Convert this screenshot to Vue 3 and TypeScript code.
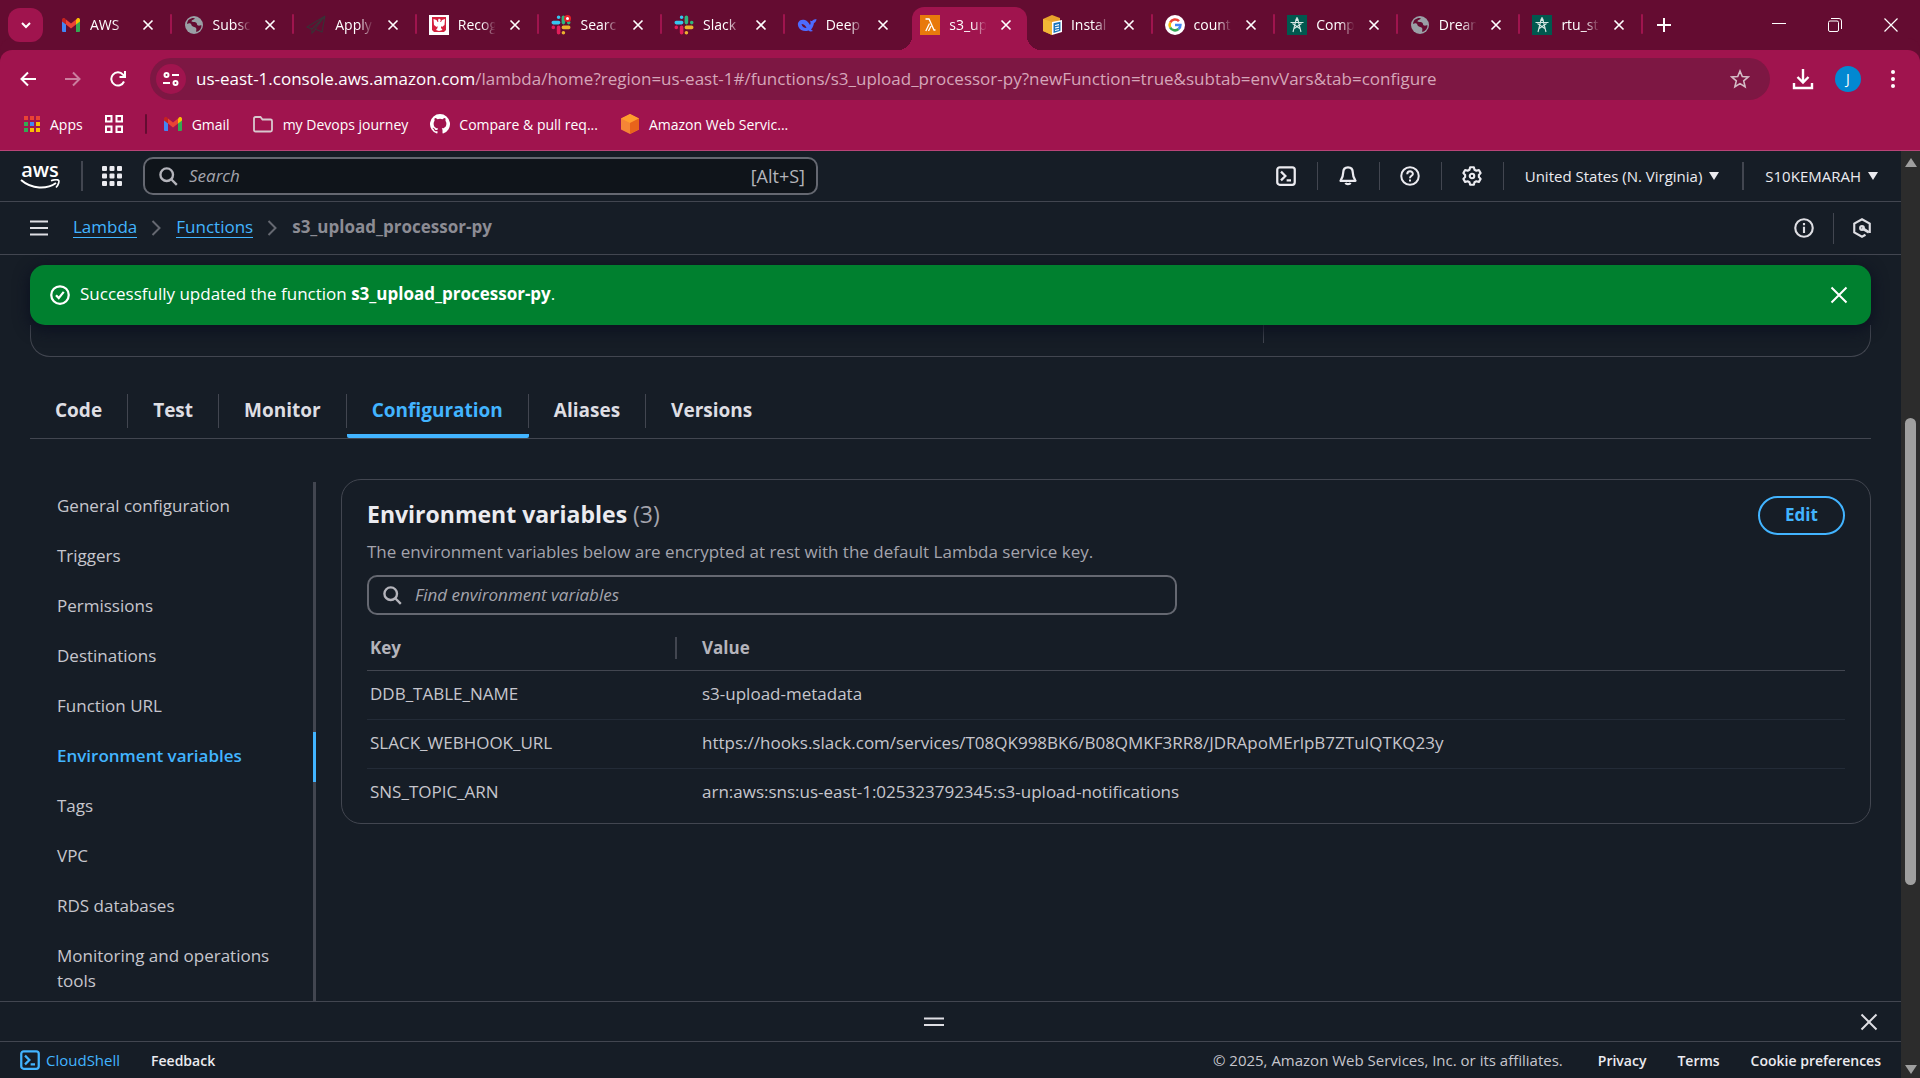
<script setup lang="ts">
import { ref } from 'vue'

interface BrowserTab {
  icon: string
  title: string
  active?: boolean
}

interface EnvVar {
  key: string
  value: string
}

const browserTabs: BrowserTab[] = [
  { icon: 'gmail', title: 'AWS' },
  { icon: 'globe', title: 'Subsc' },
  { icon: 'plane', title: 'Apply' },
  { icon: 'eagle', title: 'Recog' },
  { icon: 'slackdot', title: 'Searc' },
  { icon: 'slack', title: 'Slack' },
  { icon: 'whale', title: 'Deep' },
  { icon: 'lambda', title: 's3_up', active: true },
  { icon: 'box', title: 'Instal' },
  { icon: 'google', title: 'count' },
  { icon: 'rtu', title: 'Comp' },
  { icon: 'globe', title: 'Dream' },
  { icon: 'rtu', title: 'rtu_st' },
]

const functionTabs: string[] = ['Code', 'Test', 'Monitor', 'Configuration', 'Aliases', 'Versions']
const activeTab = ref('Configuration')

const sideItems: string[] = [
  'General configuration',
  'Triggers',
  'Permissions',
  'Destinations',
  'Function URL',
  'Environment variables',
  'Tags',
  'VPC',
  'RDS databases',
  'Monitoring and operations tools',
]
const activeItem = ref('Environment variables')

const envVars: EnvVar[] = [
  { key: 'DDB_TABLE_NAME', value: 's3-upload-metadata' },
  {
    key: 'SLACK_WEBHOOK_URL',
    value: 'https://hooks.slack.com/services/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',
  },
  { key: 'SNS_TOPIC_ARN', value: 'arn:aws:sns:us-east-1:025323792345:s3-upload-notifications' },
]

const search = ref('')
const filter = ref('')
const appColors: string[] = ['#ea4335', '#ea4335', '#ea4335', '#34a853', '#4285f4', '#fbbc04', '#34a853', '#fbbc04', '#fbbc04']
</script>

<template>
  <div class="window">
    <svg class="defs" aria-hidden="true">
      <symbol id="i-gmail" viewBox="0 0 20 20">
        <path d="M1 4.5V16a1 1 0 0 0 1 1h3V9z" fill="#4285f4" />
        <path d="M19 4.500V16a1 1 0 0 1-1 1h-3V9z" fill="#34a853" />
        <path d="M15 4.500V9.500l4-3V5c0-2-2-2.500-3-1.500z" fill="#fbbc04" />
        <path d="M1 5c0-2 2-2.500 3-1.500L5 4.500v5l-4-3z" fill="#c5221f" />
        <path d="M5 4.500l5 4 5-4v5l-5 4-5-4z" fill="#ea4335" />
      </symbol>
      <symbol id="i-globe" viewBox="0 0 20 20">
        <circle cx="10" cy="10" r="9" fill="#9aa0a6" />
        <path d="M5 4.500c2-1.500 5-2 6-1-1 1.500-3 1-3.500 2.500 0 1.500 3 .5 4.500 1.500s.5 2.500 2 3 2.500-.5 3.500 0c0 3-2 5.500-5 6.500-1-1 .5-2.500-.5-4s-4-1-4.500-3S5 8 3 9c.2-2 .8-3.500 2-4.500z" fill="#640c31" />
      </symbol>
      <symbol id="i-plane" viewBox="0 0 20 20">
        <path d="M19 1 1 12l5 2zM19 1 6 14v4l3-3M19 1l-3 16-7-3z" fill="none" stroke="#3a3036" stroke-width="1.200" />
      </symbol>
      <symbol id="i-eagle" viewBox="0 0 20 20">
        <path d="M0 0h20v20H0z" fill="#fff" />
        <path d="M3 2h14v13l-2 2H5l-2-2z" fill="#d4213d" />
        <path d="M9 5l1-1.500L12 5l-1 1.500 1 .5 1-2 3-1-.5 6-2.500 2-1-1v2l1.500 2L10 16l-3-1 1.500-2v-2l-1 1L5 10l-.5-6 3 1 1 2 1-.5z" fill="#fff" />
      </symbol>
      <symbol id="i-slack" viewBox="0 0 20 20">
        <g stroke-width="3.600" stroke-linecap="round">
          <path d="M7.600 2.300v.01M2.300 7.600h5.300" stroke="#36c5f0" />
          <path d="M12.400 2.300v5.300M17.700 7.600h.01" stroke="#2eb67d" />
          <path d="M12.400 12.400h5.300M12.400 17.700v.01" stroke="#ecb22e" />
          <path d="M7.600 12.400v5.300M2.300 12.400v.01" stroke="#e01e5a" />
        </g>
      </symbol>
      <symbol id="i-slackdot" viewBox="0 0 20 20">
        <use href="#i-slack" />
        <circle cx="16.500" cy="3.500" r="3.500" fill="#e8202a" />
        <circle cx="16.500" cy="3.500" r="1.500" fill="#fff" />
      </symbol>
      <symbol id="i-whale" viewBox="0 0 20 20">
        <path d="M1 8c1-3 4-4 7-3 2 .7 4 3 5 5 1-1 .5-3 0-4.500 1.500.5 2 1 2.500 0S18 4.500 19.500 4c-.2 2-1 3.500-2.500 4-.5 3-1.500 5-3 6.500l2 1.500c-2 .8-3.500.5-4.500-.5-4 1.500-8.500 0-10-3.500C1 10.800.7 9.500 1 8z" fill="#4d6bfe" />
        <path d="M4.500 9c2 0 4 1.500 5 4-2.500 0-4.500-1.500-5-4z" fill="#640c31" />
      </symbol>
      <symbol id="i-lambda" viewBox="0 0 20 20">
        <path d="M0 0h20v20H0z" fill="#e8790c" />
        <path d="M5.500 4h3.500l5 11h1.500M9.500 8.500 5.800 16M11 11l-2.500 5" fill="none" stroke="#fff" stroke-width="1.300" />
      </symbol>
      <symbol id="i-box" viewBox="0 0 20 20">
        <path d="M1 4l9-4 8 3v3l-8 2v12l-9-4z" fill="#e8a32c" />
        <path d="M1 4l9 3v13l-9-4z" fill="#f2b636" />
        <path d="M10 7l10-2v12l-10 3z" fill="#fff" />
        <path d="M11.500 8.300l7-1.500v9l-7 2.200z" fill="#1b75bb" />
        <path d="M13 10.500l4-.8M13 13l4-.8M13 15.500l4-1" stroke="#fff" stroke-width="1.200" />
      </symbol>
      <symbol id="i-google" viewBox="0 0 20 20">
        <circle cx="10" cy="10" r="10" fill="#fff" />
        <g fill="none" stroke-width="2.600">
          <path d="M14 6.200A5.400 5.400 0 0 0 5.200 7.500" stroke="#ea4335" />
          <path d="M5.200 7.500a5.400 5.400 0 0 0 0 5" stroke="#fbbc04" />
          <path d="M5.200 12.500a5.400 5.400 0 0 0 8.300 1.600" stroke="#34a853" />
          <path d="M13.500 14.100A5.400 5.400 0 0 0 15.400 10H10" stroke="#4285f4" />
        </g>
      </symbol>
      <symbol id="i-rtu" viewBox="0 0 20 20">
        <path d="M0 0h20v20H0z" fill="#00594f" />
        <path d="M10 2v4M9 5 6 17M11 5l3 12M3.500 7.500h13M5.500 8.500l8 5.500M14.500 8.500l-8 5.500" fill="none" stroke="#d6e8e4" stroke-width="1.100" />
        <circle cx="10" cy="4.500" r="1.500" fill="#d6e8e4" />
      </symbol>
      <symbol id="i-x" viewBox="0 0 16 16">
        <path d="M2 2l12 12M14 2 2 14" fill="none" stroke="currentColor" stroke-width="2.200" />
      </symbol>
      <symbol id="i-close" viewBox="0 0 16 16">
        <path d="M2 2l12 12M14 2 2 14" fill="none" stroke="currentColor" stroke-width="1.600" />
      </symbol>
      <symbol id="i-shell" viewBox="0 0 16 16">
        <rect x="1" y="1" width="14" height="14" rx="2" fill="none" stroke="currentColor" stroke-width="1.800" />
        <path d="M4 4.500 7.500 8 4 11.500M8.500 11.500H12" fill="none" stroke="currentColor" stroke-width="1.800" />
      </symbol>
      <symbol id="i-search" viewBox="0 0 16 16">
        <circle cx="6.500" cy="6.500" r="5.300" fill="none" stroke="currentColor" stroke-width="2" />
        <path d="M10.500 10.500 15 15" fill="none" stroke="currentColor" stroke-width="2" />
      </symbol>
    </svg>

    <header class="chrome">
      <div class="strip">
        <button class="tab-search" aria-label="Search tabs">
          <svg width="12" height="12" viewBox="0 0 12 12"><path d="M2 4l4 4 4-4" fill="none" stroke="#fff" stroke-width="2" /></svg>
        </button>
        <div class="tabs">
          <div v-for="(tab, i) in browserTabs" :key="i" class="tab" :class="{ on: tab.active, before: i === 6 }">
            <svg class="fav"><use :href="'#i-' + tab.icon" /></svg>
            <span class="tab-title">{{ tab.title }}</span>
            <button class="tab-close" aria-label="Close tab">
              <svg width="12" height="12"><use href="#i-x" /></svg>
            </button>
          </div>
        </div>
        <button class="bare new-tab" aria-label="New tab">
          <svg width="14" height="14" viewBox="0 0 14 14"><path d="M7 0v14M0 7h14" stroke="#fff" stroke-width="2" /></svg>
        </button>
        <div class="win-controls">
          <button class="bare" aria-label="Minimize"><svg width="14" height="14" viewBox="0 0 14 14"><path d="M0 5.500h14" stroke="#fff" /></svg></button>
          <button class="bare" aria-label="Restore">
            <svg width="14" height="14" viewBox="0 0 14 14" fill="none" stroke="#fff"><rect x=".5" y="3" width="10" height="10.500" rx="1.500" /><path d="M3 .5h8a2.500 2.500 0 0 1 2.500 2.500v8" /></svg>
          </button>
          <button class="bare" aria-label="Close"><svg width="14" height="14" viewBox="0 0 14 14"><path d="M.5.5l13 13M13.500.5l-13 13" stroke="#fff" stroke-width="1.200" /></svg></button>
        </div>
      </div>

      <div class="toolbar">
        <div class="nav-buttons">
          <button class="bare" aria-label="Back"><svg width="16" height="16" viewBox="0 0 16 16" fill="none" stroke="#fff" stroke-width="2"><path d="M16 8H1.500M8 1.500 1.500 8 8 14.500" /></svg></button>
          <button class="bare dim" aria-label="Forward"><svg width="16" height="16" viewBox="0 0 16 16" fill="none" stroke="#fff" stroke-width="2"><path d="M0 8h14.500M8 1.500 14.500 8 8 14.500" /></svg></button>
          <button class="bare" aria-label="Reload"><svg width="16" height="16" viewBox="0 0 16 16" fill="none" stroke="#fff" stroke-width="2"><path d="M14 10.500A6.600 6.600 0 1 1 13 3.700L15 6M15 0v6H9.500" /></svg></button>
        </div>
        <div class="omnibox">
          <button class="site-info" aria-label="Site information">
            <svg width="16" height="16" viewBox="0 0 16 16" fill="none" stroke="#fff" stroke-width="2"><circle cx="3.500" cy="4" r="2" /><path d="M9 4h7M0 12h7" /><circle cx="12.500" cy="12" r="2" /></svg>
          </button>
          <div class="url"><span class="host">us-east-1.console.aws.amazon.com</span>/lambda/home?region=us-east-1#/functions/s3_upload_processor-py?newFunction=true&amp;subtab=envVars&amp;tab=configure</div>
          <button class="bare star" aria-label="Bookmark this tab">
            <svg width="20" height="20" viewBox="0 0 20 20"><path d="M10 2l2.300 5.500 5.900.5-4.500 3.900 1.400 5.800L10 14.600l-5.100 3.100 1.400-5.800L1.800 8l5.900-.5z" fill="none" stroke="#d5bcc6" stroke-width="1.600" /></svg>
          </button>
        </div>
        <div class="tools">
          <button class="bare" aria-label="Downloads"><svg width="22" height="22" viewBox="0 0 22 22" fill="none" stroke="#fff" stroke-width="2.400"><path d="M11 1v13M5.500 9l5.500 5.500L16.500 9M2 15v5h18v-5" /></svg></button>
          <button class="avatar" aria-label="Profile">J</button>
          <button class="bare" aria-label="Menu"><svg width="6" height="20" viewBox="0 0 6 20" fill="#fff"><circle cx="3" cy="3" r="2" /><circle cx="3" cy="10" r="2" /><circle cx="3" cy="17" r="2" /></svg></button>
        </div>
      </div>

      <nav class="bookmarks">
        <a href="#">
          <svg width="18" height="18" viewBox="0 0 18 18"><rect v-for="(c, i) in appColors" :key="i" :x="(i % 3) * 6 + 1" :y="Math.floor(i / 3) * 6 + 1" width="4" height="4" :fill="c" /></svg>Apps
        </a>
        <a href="#" aria-label="Tab groups">
          <svg width="18" height="18" viewBox="0 0 18 18" fill="none" stroke="#fff" stroke-width="2"><path d="M1 1h5.500v5.500H1zM11.500 1H17v5.500h-5.500zM1 11.500h5.500V17H1zM11.500 11.500H17V17h-5.500z" /></svg>
        </a>
        <span class="bm-sep"></span>
        <a href="#"><svg width="20" height="20"><use href="#i-gmail" /></svg>Gmail</a>
        <a href="#">
          <svg width="22" height="18" viewBox="0 0 22 18"><path d="M2 3.500C2 2.500 2.500 2 3.500 2h5l2 2.500h8c1 0 1.500.5 1.500 1.500v9c0 1-.5 1.500-1.500 1.500h-15C2.500 16.500 2 16 2 15z" fill="none" stroke="#d8c8ce" stroke-width="1.800" /></svg>my Devops journey
        </a>
        <a href="#">
          <svg width="20" height="20" viewBox="0 0 16 16"><path d="M8 0a8 8 0 0 0-2.500 15.600c.4 0 .5-.2.500-.4v-1.500c-2.200.5-2.700-1-2.700-1-.4-.9-.9-1.200-.9-1.200-.7-.5 0-.5 0-.5.8.1 1.300.9 1.300.9.700 1.200 1.900.9 2.300.7 0-.5.300-.9.500-1.100-1.800-.2-3.600-.9-3.600-4 0-.8.300-1.600.800-2.100 0-.2-.4-1 .1-2.100 0 0 .7-.2 2.200.8a7.500 7.500 0 0 1 4 0c1.500-1 2.200-.8 2.200-.8.4 1.100.2 1.900.1 2.100.5.5.8 1.300.8 2.100 0 3.100-1.900 3.800-3.700 4 .3.300.6.800.6 1.500v2.200c0 .2.100.5.500.4A8 8 0 0 0 8 0z" fill="#fff" /></svg>Compare &amp; pull req...
        </a>
        <a href="#">
          <svg width="20" height="20" viewBox="0 0 20 20"><path d="M10 0l9 4.500v11L10 20l-9-4.500v-11z" fill="#f58536" /><path d="M10 0l9 4.500L10 9 1 4.500z" fill="#ff9d2e" /><path d="M10 9l9-4.500v11L10 20z" fill="#e8641b" /></svg>Amazon Web Servic...
        </a>
      </nav>
    </header>

    <div class="viewport">
      <div class="console">
        <div class="topnav">
          <a href="#" class="logo" aria-label="AWS home">
            <span>aws</span>
            <svg width="40" height="11" viewBox="0 0 40 11"><path d="M1 1c11 9.500 26 9.500 35 3" fill="none" stroke="#fff" stroke-width="2" /><path d="M31 1.800c3-1 6.500-1.200 7.500-.6s0 4.800-2.500 7.300" fill="none" stroke="#fff" stroke-width="1.700" /></svg>
          </a>
          <button class="bare waffle" aria-label="Services">
            <svg width="20" height="20" viewBox="0 0 20 20" fill="#ebebf0"><rect v-for="n in 9" :key="n" :x="((n - 1) % 3) * 7.500" :y="Math.floor((n - 1) / 3) * 7.500" width="5" height="5" rx="1" /></svg>
          </button>
          <label class="search">
            <svg width="19" height="19"><use href="#i-search" /></svg>
            <input v-model="search" type="text" placeholder="Search" aria-label="Search" />
            <span>[Alt+S]</span>
          </label>
          <div class="utils">
            <button class="bare" aria-label="CloudShell"><svg width="20" height="20"><use href="#i-shell" /></svg></button>
            <button class="bare" aria-label="Notifications">
              <svg width="20" height="20" viewBox="0 0 16 16" fill="none" stroke="currentColor" stroke-width="1.800"><path d="M8 1C5.500 1 4.200 2.800 4.200 5c0 3.500-1 5-2.200 6.800h12C12.800 10 11.800 8.500 11.800 5c0-2.200-1.300-4-3.800-4z" stroke-linejoin="round" /><path d="M6 13.500c.5 1.300 3.500 1.300 4 0" /></svg>
            </button>
            <button class="bare" aria-label="Help">
              <svg width="20" height="20" viewBox="0 0 16 16" fill="none" stroke="currentColor" stroke-width="1.600"><circle cx="8" cy="8" r="7" /><path d="M5.800 6.500C5.800 3.500 10.300 3.600 10.300 6.300 10.300 7.800 8 8 8 9.800M8 10.800v1.500" /></svg>
            </button>
            <button class="bare" aria-label="Settings">
              <svg width="20" height="20" viewBox="0 0 16 16" fill="none" stroke="currentColor" stroke-width="1.700" stroke-linejoin="round"><path d="M6.500 1h3l.5 2 1.500.8 2-.6 1.400 2.500L13.500 7.200v1.600l1.400 1.500-1.400 2.500-2-.6L10 13l-.5 2h-3L6 13l-1.500-.8-2 .6-1.400-2.500 1.400-1.500V7.200L1.100 5.700l1.400-2.500 2 .6L6 3z" /><circle cx="8" cy="8" r="1.800" /></svg>
            </button>
            <button class="bare menu region">United States (N. Virginia)<i class="caret"></i></button>
            <button class="bare menu account">S10KEMARAH<i class="caret"></i></button>
          </div>
        </div>

        <div class="crumbs">
          <button class="bare burger" aria-label="Open navigation">
            <svg width="18" height="16" viewBox="0 0 18 16"><path d="M0 1.500h18M0 8h18M0 14.500h18" stroke="#dedee3" stroke-width="2" /></svg>
          </button>
          <a href="#">Lambda</a>
          <svg class="chev" width="10" height="16" viewBox="0 0 10 16"><path d="M1.500 1 8.500 8l-7 7" fill="none" stroke="#656871" stroke-width="2" /></svg>
          <a href="#">Functions</a>
          <svg class="chev" width="10" height="16" viewBox="0 0 10 16"><path d="M1.500 1 8.500 8l-7 7" fill="none" stroke="#656871" stroke-width="2" /></svg>
          <span class="current">s3_upload_processor-py</span>
          <div class="crumb-tools">
            <button class="bare" aria-label="Info">
              <svg width="20" height="20" viewBox="0 0 16 16" fill="none" stroke="currentColor" stroke-width="1.700"><circle cx="8" cy="8" r="7" /><path d="M8 7v5M8 4v1.700" /></svg>
            </button>
            <button class="bare" aria-label="Amazon Q">
              <svg width="20" height="20" viewBox="0 0 16 16" fill="none" stroke="currentColor" stroke-width="1.700"><path d="M14.200 12V4.500L8 1 1.800 4.500v7L8 15l2.800-1.600" /><path d="M8 8l5.500 3.500" stroke-width="2.200" /><circle cx="8" cy="8" r="1.500" /></svg>
            </button>
          </div>
        </div>

        <main class="scroll">
          <div class="flash" role="status">
            <svg width="20" height="20" viewBox="0 0 16 16" fill="none" stroke="currentColor" stroke-width="1.800"><circle cx="8" cy="8" r="7" /><path d="M4.800 8.200 7 10.500l4-5" /></svg>
            <p>Successfully updated the function <b>s3_upload_processor-py</b>.</p>
            <button class="bare" aria-label="Dismiss"><svg width="20" height="20"><use href="#i-close" /></svg></button>
          </div>
          <section class="overview"><div></div></section>

          <nav class="fn-tabs" role="tablist">
            <button v-for="t in functionTabs" :key="t" role="tab" :class="{ on: t === activeTab }" @click="activeTab = t"><span>{{ t }}</span></button>
          </nav>

          <div class="config">
            <nav class="side">
              <a v-for="s in sideItems" :key="s" href="#" :class="{ on: s === activeItem }" @click.prevent="activeItem = s">{{ s }}</a>
            </nav>

            <section class="card">
              <div class="card-head">
                <h2>Environment variables <span>({{ envVars.length }})</span></h2>
                <button class="edit">Edit</button>
              </div>
              <p class="desc">The environment variables below are encrypted at rest with the default Lambda service key.</p>
              <label class="find">
                <svg width="19" height="19"><use href="#i-search" /></svg>
                <input v-model="filter" type="text" placeholder="Find environment variables" aria-label="Find environment variables" />
              </label>
              <table>
                <thead>
                  <tr><th scope="col"><div>Key</div></th><th scope="col">Value</th></tr>
                </thead>
                <tbody>
                  <tr v-for="v in envVars" :key="v.key"><td>{{ v.key }}</td><td>{{ v.value }}</td></tr>
                </tbody>
              </table>
            </section>
          </div>
        </main>

        <div class="split">
          <button class="bare handle" aria-label="Resize panel">
            <svg width="20" height="10" viewBox="0 0 20 10"><path d="M0 1.500h20M0 8h20" stroke="#dedee3" stroke-width="2" /></svg>
          </button>
          <button class="bare" aria-label="Close panel"><svg width="20" height="20"><use href="#i-close" /></svg></button>
        </div>

        <footer class="footer">
          <a href="#" class="shell"><svg width="20" height="20"><use href="#i-shell" /></svg>CloudShell</a>
          <a href="#">Feedback</a>
          <span class="copy">© 2025, Amazon Web Services, Inc. or its affiliates.</span>
          <a href="#">Privacy</a>
          <a href="#">Terms</a>
          <a href="#">Cookie preferences</a>
        </footer>
      </div>

      <div class="scrollbar" aria-hidden="true">
        <i class="up"></i>
        <div class="track"><div class="thumb"></div></div>
        <i class="down"></i>
      </div>
    </div>
  </div>
</template>

<style>
body {
  margin: 0;
  background: #161d26;
}
</style>

<style scoped>
* {
  box-sizing: border-box;
}
.window {
  display: flex;
  flex-direction: column;
  height: 100vh;
  overflow: hidden;
  font-family: "Open Sans", "Noto Sans", sans-serif;
  font-size: 17px;
  color: #c6c6cd;
}
.defs {
  position: absolute;
  width: 0;
  height: 0;
}
svg {
  flex: none;
  display: block;
}
button,
input {
  font: inherit;
  color: inherit;
}
button {
  cursor: pointer;
}
a {
  color: inherit;
  text-decoration: none;
}
.bare {
  display: flex;
  align-items: center;
  justify-content: center;
  padding: 0;
  border: 0;
  background: none;
}

/* Browser frame */
.chrome {
  flex: none;
  background: #a0144e;
  border-bottom: 1px solid #b84477;
  color: #fff;
  font-size: 14px;
}
.strip {
  display: flex;
  align-items: center;
  height: 50px;
  padding-left: 8px;
  background: #640c31;
}
.tab-search {
  display: flex;
  align-items: center;
  justify-content: center;
  width: 35px;
  height: 34px;
  margin-right: 6px;
  padding: 0;
  border: 0;
  border-radius: 12px;
  background: #a0144e;
}
.tabs {
  display: grid;
  grid-template-columns: repeat(13, minmax(0, 1fr));
  flex: 1;
  align-self: stretch;
  padding-top: 7px;
}
.tab {
  position: relative;
  display: flex;
  align-items: center;
  padding: 0 18px 7px 12px;
}
.tab::after {
  content: "";
  position: absolute;
  right: 0;
  top: 7px;
  width: 2px;
  height: 20px;
  border-radius: 1px;
  background: #a0144e;
}
.tab.before::after {
  display: none;
}
.tab.on {
  margin: 0 3px 0 5px;
  padding: 0 15px 7px 8px;
  border-radius: 12px 12px 0 0;
  background: #a0144e;
}
.tab.on::before,
.tab.on::after {
  content: "";
  position: absolute;
  top: auto;
  bottom: 0;
  width: 14px;
  height: 14px;
  border-radius: 0;
}
.tab.on::before {
  left: -14px;
  background: radial-gradient(circle at 0 0, transparent 14px, #a0144e 14px);
}
.tab.on::after {
  right: -14px;
  background: radial-gradient(circle at 100% 0, transparent 14px, #a0144e 14px);
}
.fav {
  width: 20px;
  height: 20px;
}
.tab-title {
  flex: 1;
  min-width: 0;
  margin: 0 4px 0 9px;
  overflow: hidden;
  white-space: nowrap;
  line-height: 20px;
  mask-image: linear-gradient(to right, #000 50%, transparent 80%);
}
.tab-close {
  padding: 0;
  border: 0;
  background: none;
}
.new-tab {
  width: 42px;
  height: 34px;
}
.win-controls {
  display: flex;
  justify-content: flex-end;
  width: 235px;
  gap: 42px;
  padding-right: 22px;
}
.toolbar {
  display: flex;
  align-items: center;
  height: 58px;
  background: #a0144e;
  border-radius: 12px 12px 0 0;
  box-shadow: 0 -12px 0 #640c31;
}
.nav-buttons {
  display: flex;
  gap: 29px;
  width: 150px;
  padding-left: 20px;
}
.dim {
  opacity: 0.45;
}
.omnibox {
  display: flex;
  flex: 1;
  align-items: center;
  min-width: 0;
  height: 42px;
  padding: 0 20px 0 6px;
  border-radius: 21px;
  background: #7d1743;
}
.site-info {
  display: flex;
  align-items: center;
  justify-content: center;
  width: 30px;
  height: 30px;
  padding: 0;
  border: 0;
  border-radius: 15px;
  background: #a0144e;
}
.url {
  flex: 1;
  min-width: 0;
  margin-left: 10px;
  overflow: hidden;
  white-space: nowrap;
  font-size: 17px;
  line-height: 24px;
  color: #d5a6b9;
}
.host {
  color: #fff;
}
.tools {
  display: flex;
  align-items: center;
  width: 150px;
  padding-left: 22px;
  gap: 21px;
}
.avatar {
  width: 26px;
  height: 26px;
  padding: 0;
  border: 0;
  border-radius: 13px;
  background: #0288d1;
  line-height: 24px;
  text-align: center;
}
.tools .bare:last-child {
  margin-left: 8px;
}
.bookmarks {
  display: flex;
  align-items: center;
  height: 42px;
  padding: 0 0 10px 23px;
  white-space: nowrap;
}
.bookmarks a {
  display: flex;
  align-items: center;
  gap: 9px;
  margin-right: 22px;
}
.bm-sep {
  width: 2px;
  height: 20px;
  margin-right: 16px;
  border-radius: 1px;
  background: #640c31;
}

/* Console */
.viewport {
  display: flex;
  flex: 1;
  min-height: 0;
  background: #161d26;
}
.console {
  display: flex;
  flex: 1;
  flex-direction: column;
  min-width: 0;
}
.topnav {
  display: flex;
  flex: none;
  align-items: center;
  height: 51px;
  border-bottom: 1px solid #424650;
}
.logo {
  display: flex;
  flex-direction: column;
  align-items: center;
  width: 40px;
  margin-left: 20px;
  padding-bottom: 2px;
  color: #fff;
  font-weight: 600;
}
.logo span {
  font-size: 20px;
  line-height: 18px;
}
.waffle {
  height: 30px;
  margin-left: 21px;
  padding-left: 19px;
  border-left: 2px solid #424650;
}
.search,
.find {
  display: flex;
  align-items: center;
  border: 2px solid #656871;
  border-radius: 10px;
  color: #b4b4bb;
}
.search {
  width: 675px;
  height: 38px;
  margin-left: 21px;
  padding: 0 11px 0 14px;
  background: #0f141a;
}
.search span {
  font-size: 18px;
  line-height: 24px;
}
.search input,
.find input {
  flex: 1;
  min-width: 0;
  padding: 0;
  border: 0;
  outline: 0;
  background: none;
  line-height: 24px;
}
.search input {
  margin-left: 11px;
}
::placeholder {
  color: #a4a4ad;
  font-style: italic;
  opacity: 1;
}
.utils {
  display: flex;
  align-items: center;
  margin-left: auto;
  margin-right: 23px;
  color: #ebebf0;
}
.utils > * {
  height: 28px;
  padding: 0 21px 0 20px;
  border-left: 1px solid #424650;
}
.utils > :first-child {
  border: 0;
}
.menu {
  gap: 7px;
  font-size: 15px;
  font-weight: 500;
}
.utils .region {
  padding: 0 23px 0 21px;
}
.utils .account {
  padding: 0 0 0 21px;
  border-left-width: 2px;
}
.caret {
  border: 5px solid transparent;
  border-top: 8px solid #ebebf0;
  border-bottom: 0;
}
.crumbs {
  display: flex;
  flex: none;
  align-items: center;
  height: 53px;
  padding: 0 29px 0 30px;
  border-bottom: 1px solid #424650;
}
.burger {
  margin-right: 25px;
}
.crumbs a {
  margin-bottom: 2px;
  border-bottom: 1px solid #42b4ff;
  color: #42b4ff;
  line-height: 20px;
}
.chev {
  margin: 0 15px 0 14px;
}
.current {
  margin-bottom: 2px;
  color: #8c8c94;
  font-weight: 700;
  line-height: 22px;
}
.crumb-tools {
  display: flex;
  margin-left: auto;
  color: #dedee3;
}
.crumb-tools .bare {
  height: 31px;
}
.crumb-tools .bare + .bare {
  margin-left: 19px;
  padding-left: 18px;
  border-left: 1px solid #424650;
}
.scroll {
  display: flex;
  flex: 1;
  flex-direction: column;
  min-height: 0;
  padding: 10px 30px 0;
  overflow: hidden;
}
.flash {
  position: relative;
  display: flex;
  flex: none;
  align-items: center;
  height: 60px;
  padding: 0 22px 0 20px;
  border-radius: 15px;
  background: #00802f;
  box-shadow: 0 4px 15px 1px #0b1020;
  color: #fff;
}
.flash p {
  flex: 1;
  margin: 0 0 2px 10px;
  line-height: 24px;
}
.overview {
  display: flex;
  flex: none;
  justify-content: flex-end;
  height: 32px;
  border: 1px solid #424650;
  border-top: 0;
  border-radius: 0 0 20px 20px;
}
.overview div {
  width: 33%;
  height: 18px;
  border-left: 1px solid #424650;
}
.fn-tabs {
  display: flex;
  flex: none;
  margin-top: 30px;
  border-bottom: 1px solid #424650;
}
.fn-tabs button {
  height: 51px;
  padding: 0;
  border: 0;
  border-bottom: 4px solid transparent;
  border-radius: 2px;
  background: none;
  color: #dedee3;
  font-size: 19px;
  font-weight: 700;
}
.fn-tabs span {
  display: block;
  padding: 0 25px 2px;
  border-right: 1px solid #424650;
  line-height: 32px;
}
.fn-tabs button:last-child span {
  border: 0;
}
.fn-tabs .on {
  border-bottom-color: #42b4ff;
  color: #42b4ff;
}
.config {
  display: flex;
  flex: 1;
  align-items: flex-start;
  gap: 25px;
  min-height: 0;
  margin-top: 40px;
}
.side {
  display: flex;
  flex: none;
  flex-direction: column;
  width: 286px;
  margin-top: 3px;
}
.side a {
  padding: 11px 40px 14px 27px;
  border-right: 3px solid #424650;
  line-height: 25px;
}
.side .on {
  border-color: #42b4ff;
  color: #42b4ff;
  font-weight: 600;
}
.card {
  flex: 1;
  min-width: 0;
  padding: 16px 25px 6px;
  border: 1px solid #424650;
  border-radius: 20px;
}
.card-head {
  display: flex;
  align-items: center;
  justify-content: space-between;
  height: 39px;
}
h2 {
  margin: 0 0 4px;
  color: #ebebf0;
  font-size: 23px;
  line-height: 30px;
}
h2 span {
  color: #a4a4ad;
  font-weight: 400;
}
.edit {
  width: 87px;
  height: 39px;
  padding: 0 0 2px;
  border: 2px solid #42b4ff;
  border-radius: 20px;
  background: none;
  color: #42b4ff;
  font-weight: 700;
}
.desc {
  margin: 4px 0 11px;
  color: #a4a4ad;
  line-height: 25px;
}
.find {
  max-width: 810px;
  height: 40px;
  padding: 0 14px;
}
.find input {
  margin-left: 13px;
}
table {
  width: 100%;
  margin-top: 11px;
  border-collapse: collapse;
  table-layout: fixed;
  text-align: left;
}
th {
  height: 44px;
  padding: 0 0 0 25px;
  border-bottom: 1px solid #424650;
  color: #b4b4bb;
}
th:first-child {
  width: 310px;
  padding-left: 3px;
}
th div {
  border-right: 2px solid #424650;
  line-height: 22px;
}
td {
  height: 49px;
  padding: 0 0 2px 25px;
  border-bottom: 1px solid #232b37;
}
td:first-child {
  padding-left: 3px;
}
tr:last-child td {
  border-bottom: 0;
}
.split {
  display: flex;
  flex: none;
  align-items: center;
  height: 40px;
  padding: 0 22px 0 9px;
  border-top: 1px solid #424650;
  color: #dedee3;
}
.handle {
  flex: 1;
}
.footer {
  display: flex;
  flex: none;
  align-items: center;
  height: 37px;
  padding: 0 20px;
  gap: 31px;
  border-top: 1px solid #424650;
  color: #ebebf0;
  font-size: 14px;
  font-weight: 600;
}
.shell {
  display: flex;
  align-items: center;
  gap: 6px;
  color: #42b4ff;
  font-size: 15px;
  font-weight: 400;
}
.copy {
  margin-left: auto;
  margin-right: 4px;
  color: #c6c6cd;
  font-size: 15px;
  font-weight: 400;
}
.scrollbar {
  display: flex;
  flex: none;
  flex-direction: column;
  align-items: center;
  width: 19px;
  padding: 7px 0 4px;
  background: #2c2c2c;
}
.track {
  flex: 1;
  width: 11px;
}
.thumb {
  height: 52%;
  margin-top: 251px;
  border-radius: 6px;
  background: #9f9f9f;
}
.up,
.down {
  border: 6px solid transparent;
}
.up {
  border-top: 0;
  border-bottom: 9px solid #9f9f9f;
}
.down {
  border-bottom: 0;
  border-top: 9px solid #9f9f9f;
}
</style>
